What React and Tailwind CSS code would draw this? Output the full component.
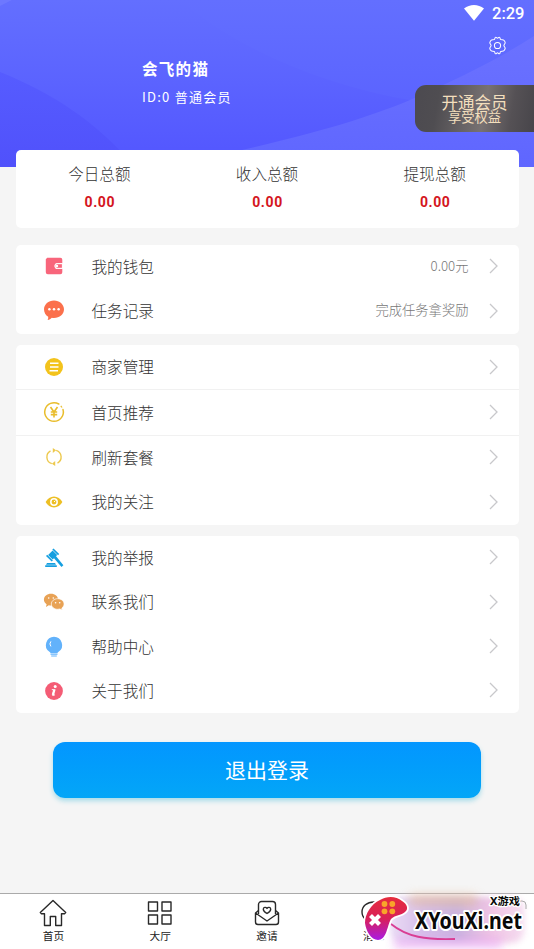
import React from 'react';

function WalletIcon() {
  return (
    <svg viewBox="0 0 24 24" className="-mt-px h-6 w-6">
      <path d="M5.200 3.800h13.100a2 2 0 0 1 2 2v3.100h-4.700a3.100 3.100 0 0 0 0 6.200h4.700v3.100a2 2 0 0 1-2 2H5.800a2 2 0 0 1-2-2V5.200z" fill="#f8657b" />
      <path d="M15.400 9.700h5v4.600h-5a2.300 2.300 0 0 1 0-4.600z" fill="#f8657b" stroke="#fff" strokeWidth="1" />
      <circle cx="15" cy="12" r="1.200" fill="#fff" />
    </svg>
  );
}

function ChatIcon() {
  return (
    <svg viewBox="0 0 24 24" className="-mt-0.5 h-6 w-6">
      <path d="M12 2.400c5.600 0 10 4 10 8.800s-4.400 8.800-10 8.800c-.8 0-1.500-.1-2.200-.2-1 1.100-2.400 2-4.200 2.200.6-1 .8-2.100.6-3.200C3.700 17.200 2 14.400 2 11.200 2 6.400 6.400 2.400 12 2.400z" fill="#fb704c" />
      <circle cx="7.400" cy="11.200" r="1.250" fill="#fff" />
      <circle cx="12" cy="11.200" r="1.250" fill="#fff" />
      <circle cx="16.600" cy="11.200" r="1.250" fill="#fff" />
    </svg>
  );
}

function ListIcon() {
  return (
    <svg viewBox="0 0 24 24" className="-mt-px h-6 w-6">
      <circle cx="12" cy="12" r="9" fill="#f3c31c" />
      <path d="M8 8.200h8.500M8 12h8.500M7.500 15.800h8.500" stroke="#fff" strokeWidth="1.500" />
    </svg>
  );
}

function YuanIcon() {
  return (
    <svg viewBox="0 0 24 24" className="-mt-0.5 h-6 w-6" fill="none" stroke="#e9bd2c">
      <path d="M16.800 4A9.300 9.300 0 1 0 21 9.500" strokeWidth="1.500" strokeLinecap="round" />
      <path d="M8.500 7l3.500 5 3.500-5M12 12v5.500M8.800 12h6.400M8.800 14.600h6.400" strokeWidth="1.600" />
      <path d="M18.800 5.800l1.200 1.700" strokeWidth="1.200" />
    </svg>
  );
}

function RefreshIcon() {
  return (
    <svg viewBox="0 0 24 24" className="-mt-px h-6 w-6" fill="none" stroke="#edc94e" strokeWidth="1.400">
      <path d="M8.500 5.900a7 7 0 0 0 1.300 12.800M15.500 18.100a7 7 0 0 0-1.300-12.800" />
      <path d="M10.800 2.900l3.300 2.400-3.300 2.700zM13.200 16l-3.300 2.700 3.300 2.400z" fill="#edc94e" stroke="none" />
    </svg>
  );
}

function EyeIcon() {
  return (
    <svg viewBox="0 0 24 24" className="h-6 w-6">
      <path d="M3.600 12C5.500 8.800 8.500 6.500 12 6.500s6.500 2.300 8.400 5.500c-1.900 3.200-4.900 5.500-8.400 5.500S5.500 15.200 3.600 12z" fill="#edbf24" />
      <circle cx="12" cy="12" r="3.200" fill="none" stroke="#fff" strokeWidth="1.500" />
      <path d="M12 12l1.500-1.500" stroke="#fff" strokeWidth="1" />
    </svg>
  );
}

function GavelIcon() {
  return (
    <svg viewBox="0 0 24 24" className="h-6 w-6">
      <g fill="#159fe0">
        <path d="M11.500 2.400l5.700 5.700-1.200 1.200-5.700-5.700zM5.200 8.700l5.700 5.700-1.200 1.200L4 9.900z" />
        <path d="M10.600 4.500l4.600 4.600-4.500 4.400-4.600-4.600z" />
        <path d="M13.700 9.800l7.700 9.500-1.900 1.700-7.900-9.300z" />
        <path d="M5 17h8l1 1.800H4zM3.200 19.200h11.600v1.800H3.200z" />
      </g>
    </svg>
  );
}

function WechatIcon() {
  return (
    <svg viewBox="0 0 24 24" className="h-6 w-6">
      <path d="M9 3.800c4 0 7.100 2.600 7.100 5.900S13 15.600 9 15.600c-.8 0-1.500-.1-2.200-.3L4 16.900l.6-2.700C3 13.100 1.900 11.500 1.900 9.700c0-3.300 3.100-5.900 7.100-5.900z" fill="#e8a255" />
      <path d="M15.700 8.700c3.500 0 6.400 2.300 6.400 5.300 0 1.700-1 3.100-2.300 4.100l.5 2-2.500-1.100c-.7.200-1.400.3-2.100.3-3.600 0-6.400-2.400-6.400-5.300s2.800-5.300 6.400-5.300z" fill="#e8a255" stroke="#fff" strokeWidth=".7" />
      <g fill="#fff">
        <circle cx="6.700" cy="8" r=".8" />
        <circle cx="11.300" cy="8" r=".8" />
        <circle cx="13.600" cy="12.700" r=".8" />
        <circle cx="17.700" cy="12.700" r=".8" />
      </g>
    </svg>
  );
}

function BulbIcon() {
  return (
    <svg viewBox="0 0 24 24" className="h-6 w-6">
      <path d="M12 1.800a8.200 8.200 0 0 1 4.900 14.700c-.8.500-1.200 1-1.400 1.500h-7c-.2-.5-.6-1-1.400-1.500A8.200 8.200 0 0 1 12 1.800z" fill="#62b2fb" />
      <path d="M8.900 6.400a4 4 0 0 0 0 5" stroke="#fff" strokeWidth="1" fill="none" />
      <path d="M8.500 19.200h7M9.200 21h5.600" stroke="#62b2fb" strokeWidth="1.200" />
    </svg>
  );
}

function InfoIcon() {
  return (
    <svg viewBox="0 0 24 24" className="h-6 w-6">
      <circle cx="12" cy="12" r="8.900" fill="#f45c75" />
      <circle cx="13.200" cy="7.500" r="1.500" fill="#fff" />
      <path d="M9.800 10.700h1.900l-1.300 4.800c-.3 1.300.9 1.600 2.600.1" stroke="#fff" strokeWidth="1" fill="none" />
      <path d="M12.600 10.200l-1.500 5.800" stroke="#fff" strokeWidth="2" />
    </svg>
  );
}

function Chevron() {
  return (
    <svg viewBox="0 0 10 16" className="-mt-px h-4 w-2.5" fill="none" stroke="#c8c8cb" strokeWidth="1.300">
      <path d="M1 1l7 7-7 7" />
    </svg>
  );
}

function Row({ icon, label, value, className = 'h-[44.400px]' }) {
  return (
    <div className={`flex items-center pr-5 pl-[26px] ${className}`}>
      {icon}
      <span className="-mt-[2px] ml-[26px] flex-1 text-[15.600px] leading-6 font-light text-[#333]">{label}</span>
      {value && <span className="-mt-0.5 mr-5 text-[13.300px] font-light text-[#777]">{value}</span>}
      <Chevron />
    </div>
  );
}

function Total({ label }) {
  return (
    <div className="flex flex-1 flex-col items-center">
      <span className="text-[15.600px] leading-6 font-light text-[#333]">{label}</span>
      <span className="mt-[7px] ml-px font-[Roboto,sans-serif] text-[14px] leading-5 font-bold tracking-[0.600px] text-[#d4151d]">0.00</span>
    </div>
  );
}

function HeaderWaves() {
  return (
    <svg viewBox="0 0 534 167" className="absolute inset-0 h-full w-full">
      <defs>
        <linearGradient id="base" x1="0" y1="0" x2="0" y2="1">
          <stop offset="0" stopColor="#636fff" />
          <stop offset=".5" stopColor="#5b63ff" />
          <stop offset="1" stopColor="#5255ff" />
        </linearGradient>
        <linearGradient id="left" x1="0" y1="0" x2="0" y2="1">
          <stop offset="0" stopColor="#565cff" />
          <stop offset="1" stopColor="#5051fb" />
        </linearGradient>
        <linearGradient id="upper" x1="0" y1="0" x2="0" y2="1">
          <stop offset="0" stopColor="#636fff" />
          <stop offset="1" stopColor="#5b64ff" />
        </linearGradient>
        <linearGradient id="right" x1="0" y1="0" x2="0" y2="1">
          <stop offset="0" stopColor="#6b72ff" />
          <stop offset="1" stopColor="#5f66ff" />
        </linearGradient>
      </defs>
      <rect width="534" height="167" fill="url(#base)" />
      <path d="M180 0C230 45 320 85 410 100L534 100V0z" fill="url(#upper)" />
      <path d="M0 72C50 92 95 120 135 167H0z" fill="url(#left)" />
      <path d="M0 0H12L0 6z" fill="#6d78ff" />
      <path d="M160 167C300 140 370 117 410 100C460 78 500 58 534 36V167z" fill="url(#right)" />
    </svg>
  );
}

function Header() {
  return (
    <header className="relative h-[167px] shrink-0 overflow-hidden text-white">
      <HeaderWaves />
      <div className="relative flex h-[28px] items-center justify-end gap-[8px] pr-[9.500px]">
        <svg viewBox="0 0 20 16" className="-mt-0.5 h-4 w-5">
          <path d="M0 3.600C5.800-1.200 14.200-1.200 20 3.600L10 15.700z" fill="#fff" />
        </svg>
        <span className="mt-px font-[Roboto,sans-serif] text-[16.500px] font-medium">2:29</span>
      </div>
      <div className="relative flex justify-end pt-[8px] pr-[27px]">
        <svg viewBox="0 0 24 24" className="h-[19px] w-[19px]" fill="none" stroke="#fff" strokeWidth="1.300" strokeLinejoin="round">
          <path d="M8.300 4.200C8.800 3.400 8.600 1.500 9.700 1.500s1.200 1.300 2.300 1.300 1.200-1.300 2.300-1.300.9 1.900 1.400 2.700 2.600.4 3.700.7 2.500 3 2.300 3.900-1.600 2-1.600 3.200 1.500 2.300 1.600 3.200-1.200 3.600-2.300 3.900-3.200-.1-3.700.7-.3 2.700-1.400 2.700-1.200-1.300-2.300-1.300-1.200 1.300-2.300 1.300-.9-1.900-1.400-2.700-2.600-.4-3.700-.7-2.500-3-2.300-3.900S3.900 13.200 3.900 12 2.400 9.700 2.300 8.800s1.200-3.600 2.300-3.900 3.200.1 3.700-.7z" />
          <circle cx="12" cy="12" r="3.900" />
        </svg>
      </div>
      <div className="relative ml-[142px] pt-[3px]">
        <div className="text-[15.500px] leading-5 font-bold tracking-[1.300px]">会飞的猫</div>
        <div className="mt-[9px] text-[13px] leading-5 tracking-[1.250px]">ID:0 普通会员</div>
      </div>
      <div className="absolute top-[85px] right-0 flex h-[47px] w-[119px] flex-col items-center rounded-l-[11px] bg-[linear-gradient(100deg,#4c4a50_0%,#4f4d51_20%,#777172_58%,#555155_80%,#47454a_100%)] pt-[8px] text-[#f3dfbd]">
        <span className="text-[16.500px] leading-[18px]">开通会员</span>
        <span className="text-[13.300px] leading-[11px]">享受权益</span>
      </div>
    </header>
  );
}

function NavItem({ label, children }) {
  return (
    <div className="flex flex-1 flex-col items-center pt-[4px] text-[#222]">
      <svg viewBox="0 0 30 30" className="h-[30px] w-[30px]" fill="none" stroke="#292929" strokeWidth="1.400" strokeLinejoin="round">
        {children}
      </svg>
      <span className="text-[10.700px] leading-4">{label}</span>
    </div>
  );
}

function Watermark() {
  return (
    <div className="absolute top-0 right-0 h-[55px] w-[176px]">
      <div className="absolute top-[3px] right-[10px] h-[46px] w-[134px] rounded-xl bg-[linear-gradient(90deg,#eadcf5_0%,#d6bde9_25%,#c9b3df_50%,#efc4e4_75%,#f5dcf0_100%)] blur-[3px]" />
      <div className="absolute top-0 left-[50px] h-[12px] w-[70px] rounded-full bg-[#e6bf9c] opacity-60 blur-[5px]" />
      <div className="absolute bottom-0 left-[35px] h-[10px] w-[110px] rounded-full bg-[#e9a0f2] opacity-60 blur-[5px]" />
      <svg viewBox="0 0 176 55" className="absolute inset-0 h-full w-full">
        <defs>
          <linearGradient id="pad" x1="0" y1="0" x2="0" y2="1">
            <stop offset="0" stopColor="#e52d3d" />
            <stop offset=".5" stopColor="#d92058" />
            <stop offset="1" stopColor="#a91be3" />
          </linearGradient>
        </defs>
        <path d="M33 30C49 43 68 46 97 45" fill="none" stroke="#d93e94" strokeWidth="1.800" />
        <path d="M160 7h4a4 4 0 0 1 4 4v4" fill="none" stroke="#aaa" strokeWidth="1" />
        <path d="M22 6C29 2 38 2 44 7C49 10 51 15 47 18C43 22 34 21 32 27C29 34 28 46 20 46C13 46 8 37 7 29C7 20 13 10 22 6z" fill="url(#pad)" stroke="#fff" strokeWidth="3.500" paintOrder="stroke" />
        <g fill="#f8a52a">
          <circle cx="26.500" cy="10" r="2.900" />
          <circle cx="34.300" cy="10" r="2.900" />
          <circle cx="26.500" cy="17.300" r="2.900" />
          <circle cx="34.300" cy="17.300" r="2.900" />
        </g>
        <path d="M12.500 21.500l9 9M21.500 21.500l-9 9" stroke="#fff" strokeWidth="4.200" />
        <g fill="#080808" stroke="#fff" strokeLinejoin="round" paintOrder="stroke" fontWeight="700">
          <text x="57" y="34.500" fontSize="23" strokeWidth="4" textLength="107" lengthAdjust="spacingAndGlyphs" fontFamily="'Noto Sans', sans-serif">XYouXi.net</text>
          <text x="132" y="11" fontSize="10.500" strokeWidth="2.500" textLength="30" lengthAdjust="spacingAndGlyphs" fontFamily="'Noto Sans', 'Noto Sans CJK SC', sans-serif">X游戏</text>
        </g>
      </svg>
    </div>
  );
}

export default function App() {
  return (
    <div className="flex h-[949px] w-[534px] flex-col overflow-hidden bg-[#f5f5f5] font-['Noto_Sans_CJK_SC',sans-serif]">
      <Header />

      <main className="relative -mt-[17px] flex flex-1 flex-col px-[15.500px]">
        <section className="flex h-[78px] rounded-[5px] bg-white pt-[11px]">
          <Total label="今日总额" />
          <Total label="收入总额" />
          <Total label="提现总额" />
        </section>

        <section className="mt-[17px] rounded-[5px] bg-white">
          <Row icon={<WalletIcon />} label="我的钱包" value="0.00元" className="h-[43.800px]" />
          <Row icon={<ChatIcon />} label="任务记录" value="完成任务拿奖励" className="h-[45px]" />
        </section>

        <section className="mt-[11px] rounded-[5px] bg-white">
          <Row icon={<ListIcon />} label="商家管理" className="h-[45.500px] border-b border-[#f1f1f1]" />
          <Row icon={<YuanIcon />} label="首页推荐" className="h-[45.500px] border-b border-[#f1f1f1]" />
          <Row icon={<RefreshIcon />} label="刷新套餐" />
          <Row icon={<EyeIcon />} label="我的关注" />
        </section>

        <section className="mt-[11px] rounded-[5px] bg-white">
          <Row icon={<GavelIcon />} label="我的举报" />
          <Row icon={<WechatIcon />} label="联系我们" />
          <Row icon={<BulbIcon />} label="帮助中心" />
          <Row icon={<InfoIcon />} label="关于我们" />
        </section>

        <button className="mx-[37.500px] mt-[28.500px] h-[56px] rounded-[12px] bg-gradient-to-b from-[#0396ff] to-[#04a6f7] text-[21px] text-white shadow-[0_3px_5px_#a8dce9]">
          退出登录
        </button>
      </main>

      <nav className="relative flex h-[56px] shrink-0 border-t border-[#aaa] bg-white">
        <NavItem label="首页">
          <path d="M15 2.500L2.300 14.500l1.200 1.300h3v11.700h5.800v-9h5.400v9h5.800V15.800h3l1.200-1.300z" />
        </NavItem>
        <NavItem label="大厅">
          <path d="M3.500 4h9v9h-9zM17 4h9v9h-9zM3.500 17h9v9h-9zM17 17h9v9h-9z" />
        </NavItem>
        <NavItem label="邀请">
          <path d="M6.500 16V6.500a3 3 0 0 1 3-3h11a3 3 0 0 1 3 3V16" />
          <path d="M6.500 12.500l-3 2.500v9a2.500 2.500 0 0 0 2.500 2.500h18a2.500 2.500 0 0 0 2.500-2.500v-9l-3-2.500M3.500 15L15 23l11.500-8" />
          <path d="M15 15.500c-2-1.200-3.700-2.700-3.700-4.300 0-2 2.700-2.500 3.700-.7 1-1.800 3.700-1.300 3.700.7 0 1.600-1.700 3.100-3.700 4.300z" />
        </NavItem>
        <NavItem label="消息">
          <path d="M15 4C8 4 3 8 3 14s5 10 12 10 12-4 12-10S22 4 15 4z" />
        </NavItem>
        <Watermark />
        <div className="flex-1" />
      </nav>
    </div>
  );
}
